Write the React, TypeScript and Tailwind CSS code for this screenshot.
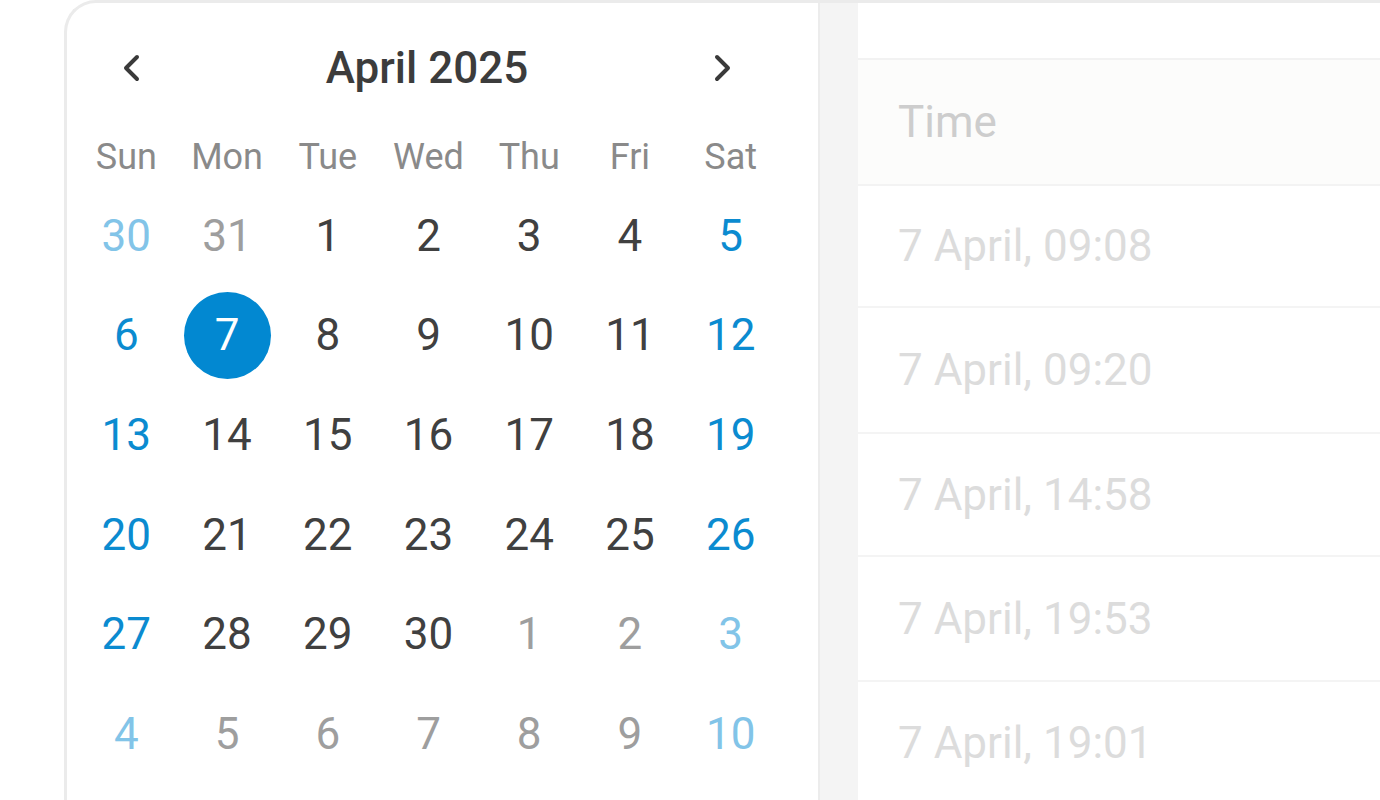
import React from "react";

type Day = { n: number; kind: "cur" | "out" };

const weekdays = ["Sun", "Mon", "Tue", "Wed", "Thu", "Fri", "Sat"];

const weeks: Day[][] = [
  [
    { n: 30, kind: "out" },
    { n: 31, kind: "out" },
    { n: 1, kind: "cur" },
    { n: 2, kind: "cur" },
    { n: 3, kind: "cur" },
    { n: 4, kind: "cur" },
    { n: 5, kind: "cur" },
  ],
  [6, 7, 8, 9, 10, 11, 12].map((n) => ({ n, kind: "cur" as const })),
  [13, 14, 15, 16, 17, 18, 19].map((n) => ({ n, kind: "cur" as const })),
  [20, 21, 22, 23, 24, 25, 26].map((n) => ({ n, kind: "cur" as const })),
  [
    { n: 27, kind: "cur" },
    { n: 28, kind: "cur" },
    { n: 29, kind: "cur" },
    { n: 30, kind: "cur" },
    { n: 1, kind: "out" },
    { n: 2, kind: "out" },
    { n: 3, kind: "out" },
  ],
  [4, 5, 6, 7, 8, 9, 10].map((n) => ({ n, kind: "out" as const })),
];

const times = [
  { t: "7 April, 09:08", h: "h-[122px]" },
  { t: "7 April, 09:20", h: "h-[126px]" },
  { t: "7 April, 14:58", h: "h-[123px]" },
  { t: "7 April, 19:53", h: "h-[125px]" },
  { t: "7 April, 19:01", h: "h-[124px]" },
];

function Chevron({ dir }: { dir: "left" | "right" }) {
  return (
    <svg width="20" height="28" viewBox="0 0 20 28" fill="none">
      <polyline
        points={dir === "left" ? "16,3 5,14 16,25" : "4,3 15,14 4,25"}
        stroke="#3a3a3a"
        strokeWidth="4"
        strokeLinecap="round"
        strokeLinejoin="round"
      />
    </svg>
  );
}

function dayColor(d: Day, col: number) {
  const weekend = col === 0 || col === 6;
  if (d.kind === "cur") return weekend ? "text-[#0b8bd0]" : "text-[#404040]";
  return weekend ? "text-[#82c4e8]" : "text-[#9e9e9e]";
}

export default function App() {
  return (
    <div className="w-[1380px] h-[800px] overflow-hidden bg-white flex pl-[64px] font-['Roboto',sans-serif]">
      <div className="flex-1 flex border-l-[3px] border-t-[3px] border-[#ebebeb] rounded-tl-[32px] overflow-hidden">
        {/* calendar */}
        <div className="w-[751px] shrink-0 pl-[9px] pt-[35px]">
          <div className="w-[705px] h-[60px] flex items-center justify-between pl-[45px] pr-[48px]">
            <Chevron dir="left" />
            <div className="text-[44px] leading-none font-medium text-[#3c3c3c]">April 2025</div>
            <Chevron dir="right" />
          </div>
          <div className="w-[705px] grid grid-cols-7 h-[58px] mt-[30px] items-center">
            {weekdays.map((w) => (
              <div key={w} className="text-center text-[36px] leading-none text-[#8a8a8a]">
                {w}
              </div>
            ))}
          </div>
          <div className="w-[705px]">
            {weeks.map((week, wi) => (
              <div key={wi} className="grid grid-cols-7 h-[99.6px] items-center">
                {week.map((d, ci) => {
                  const selected = wi === 1 && ci === 1;
                  return (
                    <div key={ci} className="flex items-center justify-center">
                      {selected ? (
                        <div className="w-[87px] h-[87px] rounded-full bg-[#0288d1] flex items-center justify-center text-[44px] leading-none text-white">
                          {d.n}
                        </div>
                      ) : (
                        <span className={`text-[44px] leading-none ${dayColor(d, ci)}`}>{d.n}</span>
                      )}
                    </div>
                  );
                })}
              </div>
            ))}
          </div>
        </div>

        {/* gutter */}
        <div className="w-[40px] shrink-0 bg-[#f4f4f4] border-l-2 border-[#ececec]" />

        {/* time list */}
        <div className="flex-1 flex flex-col">
          <div className="h-[57px] shrink-0 border-b-2 border-[#f2f2f2]" />
          <div className="h-[126px] shrink-0 bg-[#fcfcfb] border-b-2 border-[#f3f3f3] flex items-center pl-[40px]">
            <span className="text-[44px] leading-none text-[#cdcdcd]">Time</span>
          </div>
          {times.map((r) => (
            <div key={r.t} className={`${r.h} shrink-0 border-b-2 border-[#f4f4f4] flex items-center pl-[40px]`}>
              <span className="text-[44px] leading-none text-[#dcdcdc]">{r.t}</span>
            </div>
          ))}
        </div>
      </div>
    </div>
  );
}
